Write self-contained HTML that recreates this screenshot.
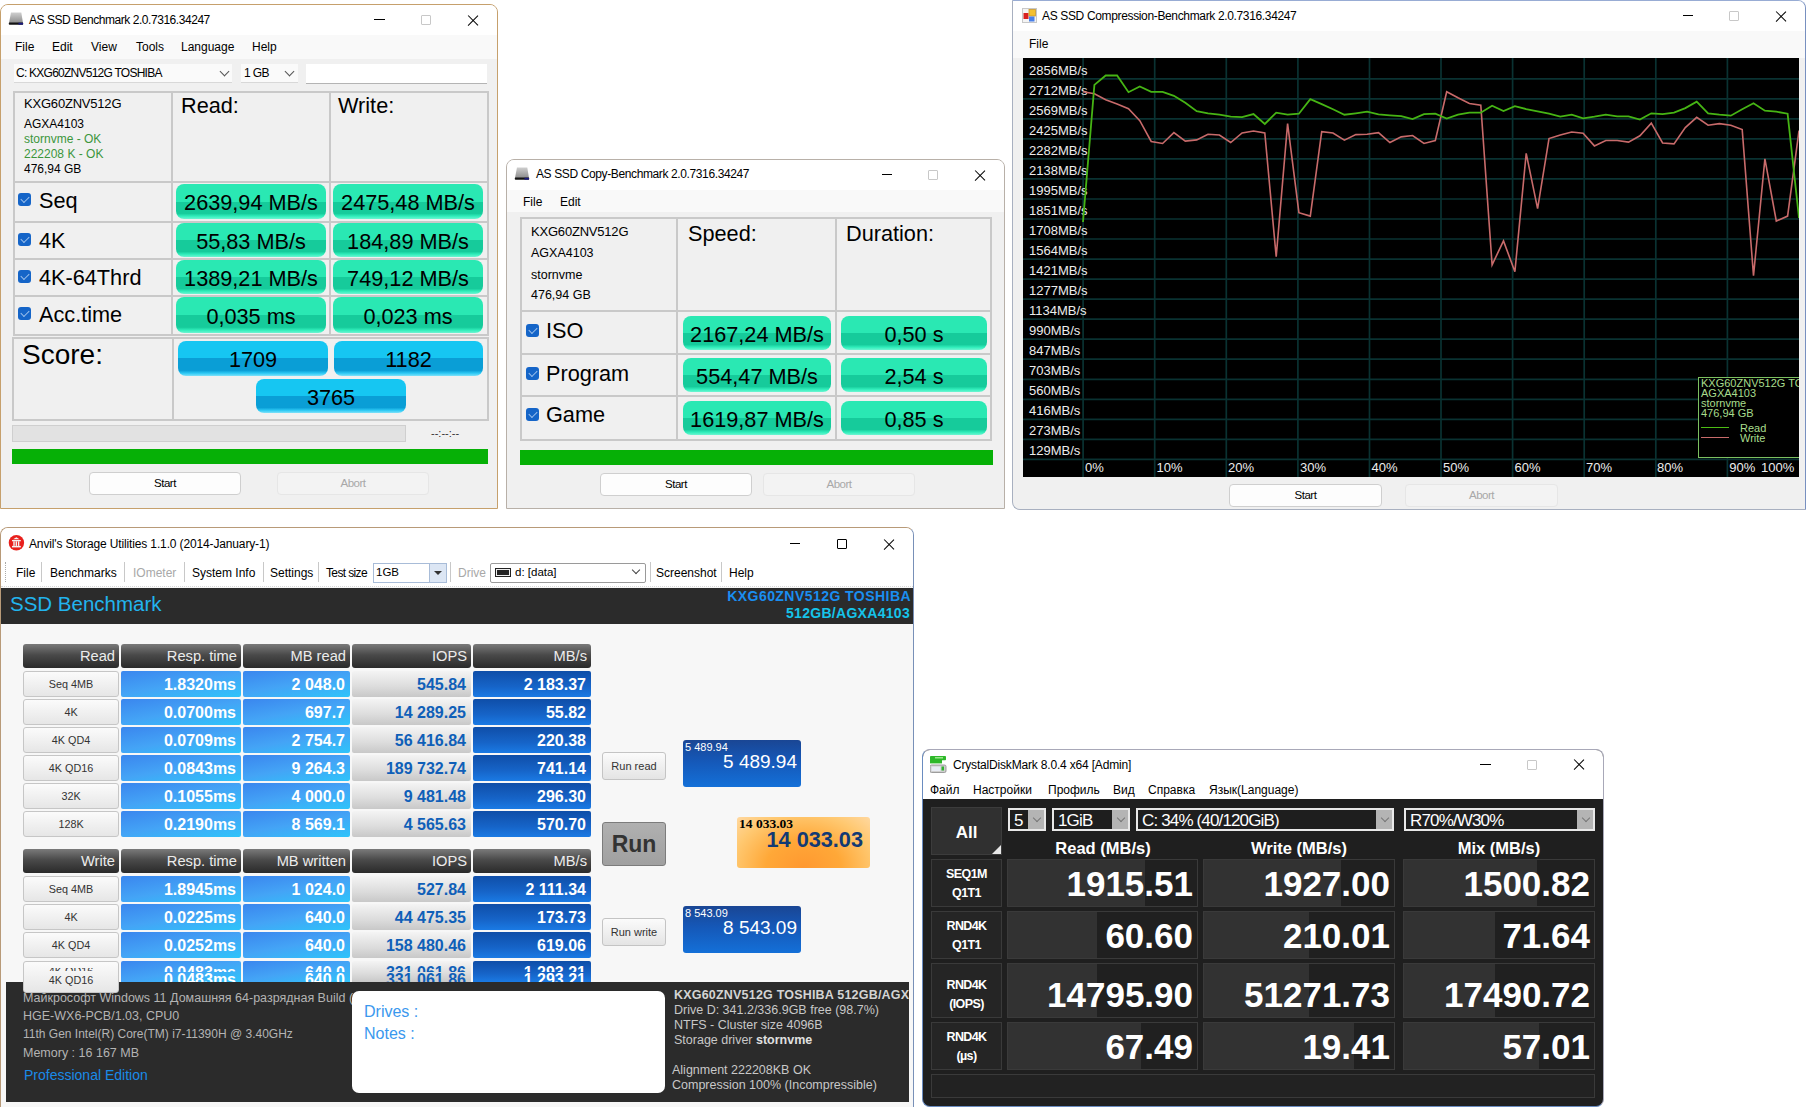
<!DOCTYPE html><html><head><meta charset="utf-8"><style>
*{margin:0;padding:0;box-sizing:border-box}
html,body{width:1806px;height:1107px;overflow:hidden;background:#fff;font-family:"Liberation Sans",sans-serif;color:#000}
div,span,svg{position:absolute;white-space:nowrap}
span.i{position:static}
.gbtn{border-radius:8px;background:linear-gradient(#2ae8b3 0%,#2ae8b3 50%,#16cb9b 50%,#16cb9b 84%,#30eebb 92%,#6ff5d2 100%);text-align:center;color:#000}
.bbtn{border-radius:8px;background:linear-gradient(#16c6f2 0%,#16c6f2 50%,#0a9ed6 50%,#0a9ed6 84%,#2cc8f4 92%,#7fe2fa 100%);text-align:center;color:#000}
.cb{width:13px;height:13px;border-radius:3px;background:#1565c8}
.cb:after{content:"";position:absolute;left:3px;top:3px;width:7px;height:4px;border-left:1.4px solid #9cc0ec;border-bottom:1.4px solid #9cc0ec;transform:rotate(-45deg)}
.hl{background:#c9c9c9;height:2px}
.vl{background:#c9c9c9;width:2px}
.btn{background:#fdfdfd;border:1px solid #cfcfcf;border-radius:4px;text-align:center;font-size:11.5px;letter-spacing:-0.5px;color:#000}
.btnd{background:#f3f3f3;border:1px solid #e6e6e6;border-radius:4px;text-align:center;font-size:11.5px;letter-spacing:-0.5px;color:#a8a8a8}
.t12{font-size:12px}
.min{height:1px;background:#000}
.max{border:1px solid #c8c8c8;border-radius:1px}
.x{width:10px;height:10px}
.x:before,.x:after{content:"";position:absolute;left:-2.1px;top:4.5px;width:14.2px;height:1.1px;background:#000;transform:rotate(45deg)}
.x:after{transform:rotate(-45deg)}
.chev{width:7px;height:7px;border-right:1px solid #555;border-bottom:1px solid #555;transform:rotate(45deg)}
.ahd{background:linear-gradient(#7a7a7a,#4a4a4a 45%,#2a2a2a);border-radius:3px;color:#ececec;font-size:14.7px;text-align:right;padding-right:4px;line-height:24px}
.alb{background:linear-gradient(#fbfbfb,#e6e6e6);border:1px solid #c6c6c6;border-radius:3px;color:#333;font-size:10.8px;text-align:center;line-height:24px}
.ab1{background:linear-gradient(170deg,#3a86ee 0%,#44a4f6 50%,#2ec4fa 100%);border-radius:2px;color:#fff;font-weight:bold;font-size:16px;text-align:right;padding-right:5px;line-height:26px}
.ab2{background:linear-gradient(#f4f4f4,#dcdcdc 60%,#c8c8c8);border-radius:2px;color:#0f5fb8;font-weight:bold;font-size:16px;text-align:right;padding-right:5px;line-height:26px}
.ab3{background:linear-gradient(#0f4ea8,#1664c8 60%,#1a7ae4);border-radius:2px;color:#fff;font-weight:bold;font-size:16px;text-align:right;padding-right:5px;line-height:26px}
.clab{background:#252525;border:1px solid #3a3a3a;color:#fff;font-weight:bold;font-size:12.5px;letter-spacing:-0.6px;text-align:center;line-height:19px}
.ccell{border:1px solid #3a3a3a;overflow:hidden}
.cval{color:#fff;font-weight:bold;font-size:35px;text-align:right}
.ccombo{background:#1e1e1e;border:2px solid #e8e8e8;color:#fff;font-size:17px;line-height:21px;padding-left:4px;letter-spacing:-0.85px}
.cbtn{background:#b4b4b4}
</style></head><body>

<div style="left:0;top:4px;width:498px;height:505px;background:#f0f0f0;border:1px solid #c6a06c;border-radius:8px 8px 0 0"></div>
<div style="left:1px;top:5px;width:496px;height:30px;background:#fff;border-radius:7px 7px 0 0"></div>
<div style="left:1px;top:35px;width:496px;height:24px;background:#f9f9f9"></div>
<svg style="left:8px;top:11px" width="16" height="15" viewBox="0 0 16 15"><defs><linearGradient id="asg" x1="0" y1="0" x2="0" y2="1"><stop offset="0" stop-color="#cfcfcf"/><stop offset="1" stop-color="#8c8c8c"/></linearGradient></defs><path d="M3 1.5 L13.3 1.5 L15 12 L1 12 Z" fill="url(#asg)"/><rect x="0.8" y="11.5" width="14.4" height="2.3" rx="0.8" fill="#141414"/><rect x="10.5" y="11.8" width="4.5" height="1.8" fill="#1a1a80"/></svg>
<div class="t12" style="left:29px;top:13px;letter-spacing:-0.45px">AS SSD Benchmark 2.0.7316.34247</div>
<div class="min" style="left:374px;top:19px;width:11px"></div>
<div class="max" style="left:421px;top:15px;width:10px;height:10px"></div>
<div class="x" style="left:468px;top:15px"></div>
<div class="t12" style="left:15px;top:40px">File</div>
<div class="t12" style="left:52px;top:40px">Edit</div>
<div class="t12" style="left:91px;top:40px">View</div>
<div class="t12" style="left:136px;top:40px">Tools</div>
<div class="t12" style="left:181px;top:40px">Language</div>
<div class="t12" style="left:252px;top:40px">Help</div>
<div style="left:14px;top:64px;width:218px;height:19px;background:#fafafa;border-bottom:1px solid #d8d8d8"></div>
<div class="t12" style="left:16px;top:66px;letter-spacing:-0.75px">C: KXG60ZNV512G TOSHIBA</div>
<div class="chev" style="left:221px;top:68px"></div>
<div style="left:241px;top:64px;width:57px;height:19px;background:#fafafa;border-bottom:1px solid #d8d8d8"></div>
<div class="t12" style="left:244px;top:66px;letter-spacing:-0.6px">1 GB</div>
<div class="chev" style="left:286px;top:68px"></div>
<div style="left:306px;top:64px;width:181px;height:20px;background:#fff;border-bottom:1px solid #b4b4b4"></div>
<div style="left:13px;top:91px;width:476px;height:245px;border:2px solid #c9c9c9"></div>
<div class="vl" style="left:171px;top:91px;height:245px"></div>
<div class="vl" style="left:329px;top:91px;height:245px"></div>
<div class="hl" style="left:13px;top:181px;width:476px"></div>
<div class="hl" style="left:13px;top:221px;width:476px"></div>
<div class="hl" style="left:13px;top:258px;width:476px"></div>
<div class="hl" style="left:13px;top:295px;width:476px"></div>
<div style="left:24px;top:96px;font-size:13px;letter-spacing:-0.2px">KXG60ZNV512G</div>
<div style="left:24px;top:117px;font-size:12px">AGXA4103</div>
<div style="left:24px;top:132px;font-size:12px;color:#3c963c">stornvme - OK</div>
<div style="left:24px;top:147px;font-size:12px;color:#3c963c">222208 K - OK</div>
<div style="left:24px;top:162px;font-size:12px">476,94 GB</div>
<div style="left:181px;top:93px;font-size:21.7px">Read:</div>
<div style="left:338px;top:93px;font-size:21.7px">Write:</div>
<div class="cb" style="left:18px;top:193px"></div><div style="left:39px;top:188px;font-size:21.7px">Seq</div>
<div class="cb" style="left:18px;top:233px"></div><div style="left:39px;top:228px;font-size:21.7px">4K</div>
<div class="cb" style="left:18px;top:270px"></div><div style="left:39px;top:265px;font-size:21.7px">4K-64Thrd</div>
<div class="cb" style="left:18px;top:307px"></div><div style="left:39px;top:302px;font-size:21.7px">Acc.time</div>
<div class="gbtn" style="left:176px;top:184px;width:150px;height:35px;font-size:21.7px;line-height:38px">2639,94 MB/s</div>
<div class="gbtn" style="left:333px;top:184px;width:150px;height:35px;font-size:21.7px;line-height:38px">2475,48 MB/s</div>
<div class="gbtn" style="left:176px;top:223px;width:150px;height:34px;font-size:21.7px;line-height:37px">55,83 MB/s</div>
<div class="gbtn" style="left:333px;top:223px;width:150px;height:34px;font-size:21.7px;line-height:37px">184,89 MB/s</div>
<div class="gbtn" style="left:176px;top:260px;width:150px;height:34px;font-size:21.7px;line-height:37px">1389,21 MB/s</div>
<div class="gbtn" style="left:333px;top:260px;width:150px;height:34px;font-size:21.7px;line-height:37px">749,12 MB/s</div>
<div class="gbtn" style="left:176px;top:297px;width:150px;height:36px;font-size:21.7px;line-height:39px">0,035 ms</div>
<div class="gbtn" style="left:333px;top:297px;width:150px;height:36px;font-size:21.7px;line-height:39px">0,023 ms</div>
<div style="left:12px;top:337px;width:477px;height:84px;border:2px solid #c9c9c9"></div>
<div class="vl" style="left:172px;top:337px;height:84px"></div>
<div style="left:22px;top:339px;font-size:28px">Score:</div>
<div class="bbtn" style="left:178px;top:341px;width:150px;height:35px;font-size:21.7px;line-height:38px">1709</div>
<div class="bbtn" style="left:334px;top:341px;width:149px;height:35px;font-size:21.7px;line-height:38px">1182</div>
<div class="bbtn" style="left:256px;top:379px;width:150px;height:34px;font-size:21.7px;line-height:37px">3765</div>
<div style="left:12px;top:425px;width:394px;height:17px;background:#e2e2e2;border:1px solid #cfcfcf"></div>
<div style="left:431px;top:427px;font-size:11px;color:#333">--:--:--</div>
<div style="left:12px;top:449px;width:476px;height:15px;background:#06b006"></div>
<div class="btn" style="left:89px;top:472px;width:152px;height:23px;line-height:21px">Start</div>
<div class="btnd" style="left:277px;top:472px;width:152px;height:23px;line-height:21px">Abort</div>


<div style="left:506px;top:159px;width:499px;height:350px;background:#f0f0f0;border:1px solid #b8b0a8;border-radius:8px 8px 0 0"></div>
<div style="left:507px;top:160px;width:497px;height:30px;background:#fff;border-radius:7px 7px 0 0"></div>
<div style="left:507px;top:190px;width:497px;height:22px;background:#f9f9f9"></div>
<svg style="left:514px;top:166px" width="16" height="15" viewBox="0 0 16 15"><defs><linearGradient id="asg" x1="0" y1="0" x2="0" y2="1"><stop offset="0" stop-color="#cfcfcf"/><stop offset="1" stop-color="#8c8c8c"/></linearGradient></defs><path d="M3 1.5 L13.3 1.5 L15 12 L1 12 Z" fill="url(#asg)"/><rect x="0.8" y="11.5" width="14.4" height="2.3" rx="0.8" fill="#141414"/><rect x="10.5" y="11.8" width="4.5" height="1.8" fill="#1a1a80"/></svg>
<div class="t12" style="left:536px;top:167px;letter-spacing:-0.38px">AS SSD Copy-Benchmark 2.0.7316.34247</div>
<div class="min" style="left:882px;top:174px;width:10px"></div>
<div class="max" style="left:928px;top:170px;width:10px;height:10px"></div>
<div class="x" style="left:975px;top:170px"></div>
<div class="t12" style="left:523px;top:195px">File</div>
<div class="t12" style="left:560px;top:195px">Edit</div>
<div style="left:520px;top:217px;width:472px;height:224px;border:2px solid #c9c9c9"></div>
<div class="vl" style="left:676px;top:217px;height:224px"></div>
<div class="vl" style="left:835px;top:217px;height:224px"></div>
<div class="hl" style="left:520px;top:310px;width:472px"></div>
<div class="hl" style="left:520px;top:353px;width:472px"></div>
<div class="hl" style="left:520px;top:395px;width:472px"></div>
<div style="left:531px;top:224px;font-size:13px;letter-spacing:-0.2px">KXG60ZNV512G</div>
<div style="left:531px;top:246px;font-size:12.5px">AGXA4103</div>
<div style="left:531px;top:268px;font-size:12.5px">stornvme</div>
<div style="left:531px;top:288px;font-size:12.5px">476,94 GB</div>
<div style="left:688px;top:221px;font-size:21.7px">Speed:</div>
<div style="left:846px;top:221px;font-size:21.7px">Duration:</div>
<div class="cb" style="left:526px;top:324px"></div><div style="left:546px;top:318px;font-size:21.7px">ISO</div>
<div class="cb" style="left:526px;top:367px"></div><div style="left:546px;top:361px;font-size:21.7px">Program</div>
<div class="cb" style="left:526px;top:408px"></div><div style="left:546px;top:402px;font-size:21.7px">Game</div>
<div class="gbtn" style="left:683px;top:316px;width:148px;height:34px;font-size:21.7px;line-height:37px">2167,24 MB/s</div>
<div class="gbtn" style="left:841px;top:316px;width:146px;height:34px;font-size:21.7px;line-height:37px">0,50 s</div>
<div class="gbtn" style="left:683px;top:358px;width:148px;height:34px;font-size:21.7px;line-height:37px">554,47 MB/s</div>
<div class="gbtn" style="left:841px;top:358px;width:146px;height:34px;font-size:21.7px;line-height:37px">2,54 s</div>
<div class="gbtn" style="left:683px;top:401px;width:148px;height:34px;font-size:21.7px;line-height:37px">1619,87 MB/s</div>
<div class="gbtn" style="left:841px;top:401px;width:146px;height:34px;font-size:21.7px;line-height:37px">0,85 s</div>
<div style="left:520px;top:450px;width:473px;height:15px;background:#06b006"></div>
<div class="btn" style="left:600px;top:473px;width:152px;height:23px;line-height:21px">Start</div>
<div class="btnd" style="left:763px;top:473px;width:152px;height:23px;line-height:21px">Abort</div>


<div style="left:1012px;top:0px;width:794px;height:510px;background:#f0f0f0;border:1px solid #a8b0c0;border-top-color:#98acd4;border-right-color:#7890c0;border-radius:0 8px 0 8px"></div>
<div style="left:1013px;top:1px;width:792px;height:30px;background:#fff;border-radius:0 7px 0 0"></div>
<div style="left:1013px;top:31px;width:792px;height:27px;background:#f9f9f9"></div>
<svg style="left:1022px;top:8px" width="15" height="15" viewBox="0 0 15 15"><rect x="0.5" y="0.5" width="14" height="14" fill="#f4f4f4" stroke="#c8c8c8"/><rect x="1.5" y="5" width="5" height="6" fill="#d82020"/><rect x="7" y="1.5" width="6.5" height="6.5" fill="#f4c030" stroke="#c89830" stroke-width="0.8"/><rect x="7" y="8.5" width="5.5" height="5" fill="#4a80e8"/></svg>
<div class="t12" style="left:1042px;top:9px;letter-spacing:-0.35px">AS SSD Compression-Benchmark 2.0.7316.34247</div>
<div class="min" style="left:1683px;top:15px;width:10px"></div>
<div class="max" style="left:1729px;top:11px;width:10px;height:10px"></div>
<div class="x" style="left:1776px;top:11px"></div>
<div class="t12" style="left:1029px;top:37px">File</div>
<div style="left:1023px;top:58px;width:776px;height:419px;background:#000;overflow:hidden">

<svg width="776" height="419" style="left:0;top:0"><line x1="0" y1="20.8" x2="776" y2="20.8" stroke="#0a3232" stroke-width="1.7"/><line x1="0" y1="40.8" x2="776" y2="40.8" stroke="#0a3232" stroke-width="1.7"/><line x1="0" y1="60.9" x2="776" y2="60.9" stroke="#0a3232" stroke-width="1.7"/><line x1="0" y1="80.9" x2="776" y2="80.9" stroke="#0a3232" stroke-width="1.7"/><line x1="0" y1="100.9" x2="776" y2="100.9" stroke="#0a3232" stroke-width="1.7"/><line x1="0" y1="120.9" x2="776" y2="120.9" stroke="#0a3232" stroke-width="1.7"/><line x1="0" y1="141.0" x2="776" y2="141.0" stroke="#0a3232" stroke-width="1.7"/><line x1="0" y1="161.0" x2="776" y2="161.0" stroke="#0a3232" stroke-width="1.7"/><line x1="0" y1="181.0" x2="776" y2="181.0" stroke="#0a3232" stroke-width="1.7"/><line x1="0" y1="201.1" x2="776" y2="201.1" stroke="#0a3232" stroke-width="1.7"/><line x1="0" y1="221.1" x2="776" y2="221.1" stroke="#0a3232" stroke-width="1.7"/><line x1="0" y1="241.1" x2="776" y2="241.1" stroke="#0a3232" stroke-width="1.7"/><line x1="0" y1="261.2" x2="776" y2="261.2" stroke="#0a3232" stroke-width="1.7"/><line x1="0" y1="281.2" x2="776" y2="281.2" stroke="#0a3232" stroke-width="1.7"/><line x1="0" y1="301.2" x2="776" y2="301.2" stroke="#0a3232" stroke-width="1.7"/><line x1="0" y1="321.3" x2="776" y2="321.3" stroke="#0a3232" stroke-width="1.7"/><line x1="0" y1="341.3" x2="776" y2="341.3" stroke="#0a3232" stroke-width="1.7"/><line x1="0" y1="361.3" x2="776" y2="361.3" stroke="#0a3232" stroke-width="1.7"/><line x1="0" y1="381.3" x2="776" y2="381.3" stroke="#0a3232" stroke-width="1.7"/><line x1="0" y1="401.4" x2="776" y2="401.4" stroke="#0a3232" stroke-width="1.7"/><line x1="60.1" y1="0" x2="60.1" y2="419" stroke="#0a3232" stroke-width="1.7"/><line x1="131.7" y1="0" x2="131.7" y2="419" stroke="#0a3232" stroke-width="1.7"/><line x1="203.3" y1="0" x2="203.3" y2="419" stroke="#0a3232" stroke-width="1.7"/><line x1="274.9" y1="0" x2="274.9" y2="419" stroke="#0a3232" stroke-width="1.7"/><line x1="346.5" y1="0" x2="346.5" y2="419" stroke="#0a3232" stroke-width="1.7"/><line x1="418.0" y1="0" x2="418.0" y2="419" stroke="#0a3232" stroke-width="1.7"/><line x1="489.6" y1="0" x2="489.6" y2="419" stroke="#0a3232" stroke-width="1.7"/><line x1="561.2" y1="0" x2="561.2" y2="419" stroke="#0a3232" stroke-width="1.7"/><line x1="632.8" y1="0" x2="632.8" y2="419" stroke="#0a3232" stroke-width="1.7"/><line x1="704.4" y1="0" x2="704.4" y2="419" stroke="#0a3232" stroke-width="1.7"/></svg>
<div style="left:6px;top:5.8px;font-size:13px;color:#ececec;line-height:14px">2856MB/s</div><div style="left:6px;top:25.8px;font-size:13px;color:#ececec;line-height:14px">2712MB/s</div><div style="left:6px;top:45.9px;font-size:13px;color:#ececec;line-height:14px">2569MB/s</div><div style="left:6px;top:65.9px;font-size:13px;color:#ececec;line-height:14px">2425MB/s</div><div style="left:6px;top:85.9px;font-size:13px;color:#ececec;line-height:14px">2282MB/s</div><div style="left:6px;top:105.9px;font-size:13px;color:#ececec;line-height:14px">2138MB/s</div><div style="left:6px;top:126.0px;font-size:13px;color:#ececec;line-height:14px">1995MB/s</div><div style="left:6px;top:146.0px;font-size:13px;color:#ececec;line-height:14px">1851MB/s</div><div style="left:6px;top:166.0px;font-size:13px;color:#ececec;line-height:14px">1708MB/s</div><div style="left:6px;top:186.1px;font-size:13px;color:#ececec;line-height:14px">1564MB/s</div><div style="left:6px;top:206.1px;font-size:13px;color:#ececec;line-height:14px">1421MB/s</div><div style="left:6px;top:226.1px;font-size:13px;color:#ececec;line-height:14px">1277MB/s</div><div style="left:6px;top:246.2px;font-size:13px;color:#ececec;line-height:14px">1134MB/s</div><div style="left:6px;top:266.2px;font-size:13px;color:#ececec;line-height:14px">990MB/s</div><div style="left:6px;top:286.2px;font-size:13px;color:#ececec;line-height:14px">847MB/s</div><div style="left:6px;top:306.3px;font-size:13px;color:#ececec;line-height:14px">703MB/s</div><div style="left:6px;top:326.3px;font-size:13px;color:#ececec;line-height:14px">560MB/s</div><div style="left:6px;top:346.3px;font-size:13px;color:#ececec;line-height:14px">416MB/s</div><div style="left:6px;top:366.3px;font-size:13px;color:#ececec;line-height:14px">273MB/s</div><div style="left:6px;top:386.4px;font-size:13px;color:#ececec;line-height:14px">129MB/s</div><div style="left:62.0px;top:402.5px;font-size:13px;color:#ececec;line-height:14px">0%</div><div style="left:133.5px;top:402.5px;font-size:13px;color:#ececec;line-height:14px">10%</div><div style="left:205.0px;top:402.5px;font-size:13px;color:#ececec;line-height:14px">20%</div><div style="left:277.0px;top:402.5px;font-size:13px;color:#ececec;line-height:14px">30%</div><div style="left:348.5px;top:402.5px;font-size:13px;color:#ececec;line-height:14px">40%</div><div style="left:420.0px;top:402.5px;font-size:13px;color:#ececec;line-height:14px">50%</div><div style="left:491.5px;top:402.5px;font-size:13px;color:#ececec;line-height:14px">60%</div><div style="left:563.0px;top:402.5px;font-size:13px;color:#ececec;line-height:14px">70%</div><div style="left:634.0px;top:402.5px;font-size:13px;color:#ececec;line-height:14px">80%</div><div style="left:706.3px;top:402.5px;font-size:13px;color:#ececec;line-height:14px">90%</div><div style="left:738.0px;top:402.5px;font-size:13px;color:#ececec;line-height:14px">100%</div>
<svg width="776" height="419" style="left:0;top:0"><polyline points="60.0,33.8 71.4,35.8 82.7,41.8 94.1,46.1 105.5,50.7 116.8,62.6 128.2,83.5 139.6,85.5 150.9,74.6 162.3,83.1 173.7,81.9 185.0,76.2 196.4,77.0 207.7,84.5 219.1,75.0 230.5,73.0 241.8,75.0 253.2,198.8 264.6,65.6 275.9,154.7 287.3,158.1 298.7,73.6 310.0,75.0 321.4,82.1 332.8,76.6 344.1,76.2 355.5,74.6 366.9,84.5 378.2,78.9 389.6,77.5 401.0,85.5 412.3,82.5 423.7,33.8 435.0,39.8 446.4,45.5 457.8,47.3 469.1,206.8 480.5,182.9 491.9,213.7 503.2,95.4 514.6,150.7 526.0,80.5 537.3,77.1 548.7,74.0 560.1,75.2 571.4,87.9 582.8,82.5 594.2,82.5 605.5,84.1 616.9,77.8 628.3,65.2 639.6,85.0 651.0,85.9 662.3,69.6 673.7,59.3 685.1,67.2 696.4,65.6 707.8,67.2 719.2,71.6 730.5,217.7 741.9,100.8 753.3,163.0 764.6,158.1 776.0,72.6" fill="none" stroke="#c86a6a" stroke-width="1.6"/><polyline points="60.0,164.0 71.4,26.9 82.7,17.5 94.1,17.5 105.5,34.2 116.8,28.4 128.2,33.8 139.6,33.8 150.9,37.8 162.3,44.7 173.7,53.1 185.0,55.3 196.4,56.7 207.7,58.7 219.1,59.1 230.5,56.1 241.8,66.0 253.2,54.7 264.6,56.7 275.9,55.7 287.3,41.2 298.7,46.1 310.0,51.3 321.4,56.7 332.8,55.3 344.1,53.7 355.5,56.3 366.9,57.3 378.2,58.1 389.6,61.0 401.0,56.1 412.3,55.7 423.7,60.6 435.0,56.7 446.4,54.7 457.8,54.7 469.1,47.7 480.5,53.1 491.9,48.1 503.2,51.1 514.6,53.3 526.0,55.7 537.3,58.7 548.7,56.7 560.1,60.3 571.4,58.7 582.8,56.7 594.2,58.3 605.5,58.3 616.9,61.6 628.3,55.3 639.6,56.1 651.0,54.7 662.3,50.1 673.7,43.7 685.1,55.3 696.4,56.7 707.8,57.7 719.2,51.3 730.5,45.3 741.9,52.7 753.3,53.7 764.6,55.7 776.0,160.0" fill="none" stroke="#46b414" stroke-width="1.8"/></svg>
<div style="left:675px;top:319px;width:120px;height:81px;border:1px solid #7cc060;background:#000"></div>
<div style="left:678px;top:320px;font-size:11px;line-height:10px;color:#a8dc8c">KXG60ZNV512G TOSHIBA<br>AGXA4103<br>stornvme<br>476,94 GB</div>
<div style="left:678px;top:369px;width:28px;height:1px;background:#4cbc14"></div>
<div style="left:678px;top:379px;width:28px;height:1px;background:#c86a6a"></div>
<div style="left:717px;top:365px;font-size:11px;line-height:10px;color:#a8dc8c">Read<br>Write</div>

</div>

<div class="btn" style="left:1229px;top:484px;width:153px;height:23px;line-height:21px">Start</div>
<div class="btnd" style="left:1405px;top:484px;width:153px;height:23px;line-height:21px">Abort</div>


<div style="left:0px;top:527px;width:914px;height:585px;background:#f7f7f7;border:1px solid #b89a78;border-right-color:#7890b8;border-radius:8px 8px 0 0"></div>
<div style="left:1px;top:528px;width:912px;height:30px;background:#fff;border-radius:7px 7px 0 0"></div>
<div style="left:1px;top:558px;width:912px;height:29px;background:#fff;border-bottom:1px dotted #d8d8d8"></div>
<svg style="left:8px;top:535px" width="17" height="16" viewBox="0 0 17 16"><circle cx="8.4" cy="7.8" r="7.7" fill="#e8201c"/><path d="M8.3 2.2 L11.5 4.3 L5.1 4.3 Z" fill="#f4f4f4"/><rect x="4" y="5" width="8.8" height="1.3" fill="#f4f4f4"/><rect x="5.3" y="6.3" width="1.4" height="4.6" fill="#f4f4f4"/><rect x="7.6" y="6.3" width="1.4" height="4.6" fill="#f4f4f4"/><rect x="9.9" y="6.3" width="1.4" height="4.6" fill="#f4f4f4"/><rect x="4" y="10.9" width="8.8" height="1.5" fill="#f4f4f4"/></svg>

<div class="t12" style="left:29px;top:537px;letter-spacing:-0.14px">Anvil's Storage Utilities 1.1.0 (2014-January-1)</div>
<div class="min" style="left:790px;top:543px;width:10px"></div>
<div style="left:837px;top:539px;width:10px;height:10px;border:1.2px solid #000;border-radius:1px"></div>
<div class="x" style="left:884px;top:539px"></div>
<div style="left:5px;top:562px;width:1px;height:20px;border-left:1px dotted #aaa"></div>
<div class="t12" style="left:16px;top:566px">File</div>
<div style="left:41px;top:562px;width:1px;height:20px;background:#c8c8c8"></div>
<div class="t12" style="left:50px;top:566px">Benchmarks</div>
<div style="left:124px;top:562px;width:1px;height:20px;background:#c8c8c8"></div>
<div class="t12" style="left:133px;top:566px;color:#a8a8a8">IOmeter</div>
<div style="left:184px;top:562px;width:1px;height:20px;background:#c8c8c8"></div>
<div class="t12" style="left:192px;top:566px">System Info</div>
<div style="left:263px;top:562px;width:1px;height:20px;background:#c8c8c8"></div>
<div class="t12" style="left:270px;top:566px">Settings</div>
<div style="left:318px;top:562px;width:1px;height:20px;background:#c8c8c8"></div>
<div class="t12" style="left:326px;top:566px;letter-spacing:-0.63px">Test size</div>
<div style="left:373px;top:563px;width:74px;height:20px;background:#fff;border:1px solid #a8bcd8"></div>
<div style="left:429px;top:564px;width:17px;height:18px;background:#dce6f4;border-left:1px solid #a8bcd8"></div>
<div style="left:434px;top:571px;width:0;height:0;border-left:4px solid transparent;border-right:4px solid transparent;border-top:4px solid #333"></div>
<div style="left:376px;top:566px;font-size:11.5px">1GB</div>
<div style="left:450px;top:562px;width:1px;height:20px;background:#c8c8c8"></div>
<div class="t12" style="left:458px;top:566px;color:#a8a8a8">Drive</div>
<div style="left:490px;top:563px;width:156px;height:20px;background:#fff;border:1px solid #9a9a9a;border-radius:2px"></div>
<div style="left:495px;top:568px;width:16px;height:9px;background:#222;border:1px solid #222;box-shadow:inset 0 0 0 1px #eee"></div>
<div style="left:515px;top:566px;font-size:11.5px">d: [data]</div>
<div class="chev" style="left:633px;top:567px;width:6px;height:6px;border-color:#444"></div>
<div style="left:650px;top:562px;width:1px;height:20px;background:#c8c8c8"></div>
<div class="t12" style="left:656px;top:566px">Screenshot</div>
<div style="left:721px;top:562px;width:1px;height:20px;background:#c8c8c8"></div>
<div class="t12" style="left:729px;top:566px">Help</div>
<div style="left:1px;top:588px;width:912px;height:36px;background:#2b2b2b"></div>
<div style="left:10px;top:592px;font-size:20.5px;color:#22b4ee">SSD Benchmark</div>
<div style="left:560px;top:588px;width:351px;font-size:14px;font-weight:bold;letter-spacing:0.45px;color:#1a8ef0;text-align:right;line-height:16px">KXG60ZNV512G TOSHIBA</div>
<div style="left:560px;top:605px;width:350px;font-size:14px;font-weight:bold;letter-spacing:0.3px;color:#16c4ea;text-align:right;line-height:16px">512GB/AGXA4103</div>

<div class="ahd" style="left:23px;top:644px;width:96px;height:24px">Read</div>
<div class="ahd" style="left:121px;top:644px;width:120px;height:24px">Resp. time</div>
<div class="ahd" style="left:243px;top:644px;width:107px;height:24px">MB read</div>
<div class="ahd" style="left:352px;top:644px;width:119px;height:24px">IOPS</div>
<div class="ahd" style="left:473px;top:644px;width:118px;height:24px">MB/s</div>
<div class="alb" style="left:23px;top:671px;width:96px;height:26px;line-height:25px">Seq 4MB</div>
<div class="ab1" style="left:121px;top:671px;width:120px;height:26px;line-height:27px">1.8320ms</div>
<div class="ab1" style="left:243px;top:671px;width:107px;height:26px;line-height:27px">2 048.0</div>
<div class="ab2" style="left:352px;top:671px;width:119px;height:26px;line-height:27px">545.84</div>
<div class="ab3" style="left:473px;top:671px;width:118px;height:26px;line-height:27px">2 183.37</div>
<div class="alb" style="left:23px;top:699px;width:96px;height:26px;line-height:25px">4K</div>
<div class="ab1" style="left:121px;top:699px;width:120px;height:26px;line-height:27px">0.0700ms</div>
<div class="ab1" style="left:243px;top:699px;width:107px;height:26px;line-height:27px">697.7</div>
<div class="ab2" style="left:352px;top:699px;width:119px;height:26px;line-height:27px">14 289.25</div>
<div class="ab3" style="left:473px;top:699px;width:118px;height:26px;line-height:27px">55.82</div>
<div class="alb" style="left:23px;top:727px;width:96px;height:26px;line-height:25px">4K QD4</div>
<div class="ab1" style="left:121px;top:727px;width:120px;height:26px;line-height:27px">0.0709ms</div>
<div class="ab1" style="left:243px;top:727px;width:107px;height:26px;line-height:27px">2 754.7</div>
<div class="ab2" style="left:352px;top:727px;width:119px;height:26px;line-height:27px">56 416.84</div>
<div class="ab3" style="left:473px;top:727px;width:118px;height:26px;line-height:27px">220.38</div>
<div class="alb" style="left:23px;top:755px;width:96px;height:26px;line-height:25px">4K QD16</div>
<div class="ab1" style="left:121px;top:755px;width:120px;height:26px;line-height:27px">0.0843ms</div>
<div class="ab1" style="left:243px;top:755px;width:107px;height:26px;line-height:27px">9 264.3</div>
<div class="ab2" style="left:352px;top:755px;width:119px;height:26px;line-height:27px">189 732.74</div>
<div class="ab3" style="left:473px;top:755px;width:118px;height:26px;line-height:27px">741.14</div>
<div class="alb" style="left:23px;top:783px;width:96px;height:26px;line-height:25px">32K</div>
<div class="ab1" style="left:121px;top:783px;width:120px;height:26px;line-height:27px">0.1055ms</div>
<div class="ab1" style="left:243px;top:783px;width:107px;height:26px;line-height:27px">4 000.0</div>
<div class="ab2" style="left:352px;top:783px;width:119px;height:26px;line-height:27px">9 481.48</div>
<div class="ab3" style="left:473px;top:783px;width:118px;height:26px;line-height:27px">296.30</div>
<div class="alb" style="left:23px;top:811px;width:96px;height:26px;line-height:25px">128K</div>
<div class="ab1" style="left:121px;top:811px;width:120px;height:26px;line-height:27px">0.2190ms</div>
<div class="ab1" style="left:243px;top:811px;width:107px;height:26px;line-height:27px">8 569.1</div>
<div class="ab2" style="left:352px;top:811px;width:119px;height:26px;line-height:27px">4 565.63</div>
<div class="ab3" style="left:473px;top:811px;width:118px;height:26px;line-height:27px">570.70</div>
<div class="ahd" style="left:23px;top:849px;width:96px;height:24px">Write</div>
<div class="ahd" style="left:121px;top:849px;width:120px;height:24px">Resp. time</div>
<div class="ahd" style="left:243px;top:849px;width:107px;height:24px">MB written</div>
<div class="ahd" style="left:352px;top:849px;width:119px;height:24px">IOPS</div>
<div class="ahd" style="left:473px;top:849px;width:118px;height:24px">MB/s</div>
<div class="alb" style="left:23px;top:876px;width:96px;height:26px;line-height:25px">Seq 4MB</div>
<div class="ab1" style="left:121px;top:876px;width:120px;height:26px;line-height:27px">1.8945ms</div>
<div class="ab1" style="left:243px;top:876px;width:107px;height:26px;line-height:27px">1 024.0</div>
<div class="ab2" style="left:352px;top:876px;width:119px;height:26px;line-height:27px">527.84</div>
<div class="ab3" style="left:473px;top:876px;width:118px;height:26px;line-height:27px">2 111.34</div>
<div class="alb" style="left:23px;top:904px;width:96px;height:26px;line-height:25px">4K</div>
<div class="ab1" style="left:121px;top:904px;width:120px;height:26px;line-height:27px">0.0225ms</div>
<div class="ab1" style="left:243px;top:904px;width:107px;height:26px;line-height:27px">640.0</div>
<div class="ab2" style="left:352px;top:904px;width:119px;height:26px;line-height:27px">44 475.35</div>
<div class="ab3" style="left:473px;top:904px;width:118px;height:26px;line-height:27px">173.73</div>
<div class="alb" style="left:23px;top:932px;width:96px;height:26px;line-height:25px">4K QD4</div>
<div class="ab1" style="left:121px;top:932px;width:120px;height:26px;line-height:27px">0.0252ms</div>
<div class="ab1" style="left:243px;top:932px;width:107px;height:26px;line-height:27px">640.0</div>
<div class="ab2" style="left:352px;top:932px;width:119px;height:26px;line-height:27px">158 480.46</div>
<div class="ab3" style="left:473px;top:932px;width:118px;height:26px;line-height:27px">619.06</div>
<div class="ab1" style="left:121px;top:961px;width:120px;height:21px;border-radius:2px 2px 0 0"></div>
<div style="left:121px;top:961px;width:120px;height:10.5px;overflow:hidden"><div class="ab1" style="left:0;top:4.4px;width:120px;height:16px;line-height:16px;background:none">0.0483ms</div></div>
<div style="left:121px;top:971.5px;width:120px;height:10.5px;overflow:hidden"><div class="ab1" style="left:0;top:0.6px;width:120px;height:16px;line-height:16px;background:none">0.0483ms</div></div>
<div class="ab1" style="left:243px;top:961px;width:107px;height:21px;border-radius:2px 2px 0 0"></div>
<div style="left:243px;top:961px;width:107px;height:10.5px;overflow:hidden"><div class="ab1" style="left:0;top:4.4px;width:107px;height:16px;line-height:16px;background:none">640.0</div></div>
<div style="left:243px;top:971.5px;width:107px;height:10.5px;overflow:hidden"><div class="ab1" style="left:0;top:0.6px;width:107px;height:16px;line-height:16px;background:none">640.0</div></div>
<div class="ab2" style="left:352px;top:961px;width:119px;height:21px;border-radius:2px 2px 0 0"></div>
<div style="left:352px;top:961px;width:119px;height:10.5px;overflow:hidden"><div class="ab2" style="left:0;top:4.4px;width:119px;height:16px;line-height:16px;background:none">331 061.86</div></div>
<div style="left:352px;top:971.5px;width:119px;height:10.5px;overflow:hidden"><div class="ab2" style="left:0;top:0.6px;width:119px;height:16px;line-height:16px;background:none">331 061.86</div></div>
<div class="ab3" style="left:473px;top:961px;width:118px;height:21px;border-radius:2px 2px 0 0"></div>
<div style="left:473px;top:961px;width:118px;height:10.5px;overflow:hidden"><div class="ab3" style="left:0;top:4.4px;width:118px;height:16px;line-height:16px;background:none">1 293.21</div></div>
<div style="left:473px;top:971.5px;width:118px;height:10.5px;overflow:hidden"><div class="ab3" style="left:0;top:0.6px;width:118px;height:16px;line-height:16px;background:none">1 293.21</div></div>

<div style="left:602px;top:752px;width:64px;height:28px;background:linear-gradient(#fbfbfb,#e4e4e4);border:1px solid #c4c4c4;border-radius:3px;font-size:11px;color:#333;text-align:center;line-height:26px">Run read</div>
<div style="left:683px;top:740px;width:118px;height:47px;background:linear-gradient(#1a4694,#1558b8 45%,#1470d8);border-radius:3px"></div>
<div style="left:685px;top:741px;font-size:11px;color:#fff;line-height:12px">5 489.94</div>
<div style="left:683px;top:751px;width:114px;font-size:19px;color:#fff;text-align:right;line-height:22px">5 489.94</div>
<div style="left:602px;top:822px;width:64px;height:44px;background:linear-gradient(#b0b0b0,#a0a0a0);border:1px solid #7c7c7c;border-radius:3px;font-size:23px;font-weight:bold;color:#333;text-align:center;line-height:42px">Run</div>
<div style="left:737px;top:817px;width:133px;height:51px;background:radial-gradient(ellipse at 50% 100%,#ff9830 0%,#ffa838 40%,#ffc870 75%,#ffd8a0 100%);border-radius:3px"></div>
<div style="left:739px;top:817px;font-size:13.5px;font-weight:bold;font-family:'Liberation Serif',serif;color:#000;line-height:14px">14 033.03</div>
<div style="left:737px;top:828px;width:126px;font-size:21.7px;font-weight:bold;color:#123a74;text-align:right;line-height:24px">14 033.03</div>
<div style="left:602px;top:918px;width:64px;height:28px;background:linear-gradient(#fbfbfb,#e4e4e4);border:1px solid #c4c4c4;border-radius:3px;font-size:11px;color:#333;text-align:center;line-height:26px">Run write</div>
<div style="left:683px;top:906px;width:118px;height:47px;background:linear-gradient(#1a4694,#1558b8 45%,#1470d8);border-radius:3px"></div>
<div style="left:685px;top:907px;font-size:11px;color:#fff;line-height:12px">8 543.09</div>
<div style="left:683px;top:917px;width:114px;font-size:19px;color:#fff;text-align:right;line-height:22px">8 543.09</div>
<div style="left:6px;top:982px;width:903px;height:120px;background:#2b2b2b"></div>
<div class="alb" style="left:23px;top:961px;width:96px;height:32px;line-height:36px">4K QD16</div><div style="left:23px;top:968px;width:96px;height:3px;overflow:hidden"><div style="left:0;top:-3px;width:96px;font-size:10.8px;color:#333;text-align:center;line-height:12px">4K QD16</div></div>
<div style="left:23px;top:991px;font-size:12.5px;color:#b4b4b4;line-height:14px">Майкрософт Windows 11 Домашняя 64-разрядная Build (2</div>
<div style="left:23px;top:1009px;font-size:12.5px;color:#b4b4b4;line-height:14px">HGE-WX6-PCB/1.03, CPU0</div>
<div style="left:23px;top:1027px;font-size:12px;color:#b4b4b4;line-height:14px">11th Gen Intel(R) Core(TM) i7-11390H @ 3.40GHz</div>
<div style="left:23px;top:1046px;font-size:12.5px;color:#b4b4b4;line-height:14px">Memory : 16 167 MB</div>
<div style="left:24px;top:1068px;font-size:14px;color:#1a8ae8;line-height:15px">Professional Edition</div>
<div style="left:352px;top:991px;width:313px;height:102px;background:#fff;border-radius:7px"></div>
<div style="left:364px;top:1001.5px;font-size:16px;color:#3a98ee;line-height:19px">Drives :</div>
<div style="left:364px;top:1024px;font-size:16px;color:#3a98ee;line-height:19px">Notes :</div>
<div style="left:665px;top:982px;width:244px;height:120px;overflow:hidden">
<div style="left:9px;top:6px;font-size:12.5px;font-weight:bold;color:#d4d4d4;line-height:14px;letter-spacing:0.2px">KXG60ZNV512G TOSHIBA 512GB/AGXA4103</div>
</div>
<div style="left:674px;top:1003px;font-size:12.5px;color:#c8c8c8;line-height:14px">Drive D: 341.2/336.9GB free (98.7%)</div>
<div style="left:674px;top:1018px;font-size:12.5px;color:#c8c8c8;line-height:14px">NTFS - Cluster size 4096B</div>
<div style="left:674px;top:1033px;font-size:12.5px;color:#c8c8c8;line-height:14px">Storage driver <b style="color:#e0e0e0">stornvme</b></div>
<div style="left:672px;top:1063px;font-size:12.5px;color:#c8c8c8;line-height:14px">Alignment 222208KB OK</div>
<div style="left:672px;top:1078px;font-size:12.5px;color:#c8c8c8;line-height:14px">Compression 100% (Incompressible)</div>


<div style="left:922px;top:749px;width:682px;height:358px;background:#1f1f1f;border:1px solid #a8a8b8;border-left-color:#6a8cc0;border-bottom-color:#6a8cc0;border-radius:8px 8px 8px 8px"></div>
<div style="left:923px;top:750px;width:680px;height:49px;background:#fff;border-radius:7px 7px 0 0"></div>
<svg style="left:930px;top:756px" width="17" height="17" viewBox="0 0 17 17"><rect x="0" y="0" width="16" height="4.2" rx="0.8" fill="#2eb82a"/><rect x="0" y="3.8" width="12" height="3.6" fill="#2eb82a"/><rect x="5" y="1" width="8" height="1.5" fill="#9ae88a"/><rect x="0" y="9" width="16" height="7.5" rx="1.5" fill="#cfcfcf" stroke="#8a8a8a" stroke-width="0.8"/><rect x="1.5" y="10.5" width="9" height="4.5" fill="#e8ecf4"/><rect x="11.5" y="10.5" width="2.5" height="4" fill="#30b030"/></svg>
<div class="t12" style="left:953px;top:758px;letter-spacing:-0.18px">CrystalDiskMark 8.0.4 x64 [Admin]</div>
<div class="min" style="left:1480px;top:764px;width:11px"></div>
<div class="max" style="left:1527px;top:760px;width:10px;height:10px"></div>
<div class="x" style="left:1574px;top:759px"></div>
<div class="t12" style="left:930px;top:783px">Файл</div>
<div class="t12" style="left:973px;top:783px">Настройки</div>
<div class="t12" style="left:1048px;top:783px">Профиль</div>
<div class="t12" style="left:1113px;top:783px">Вид</div>
<div class="t12" style="left:1148px;top:783px">Справка</div>
<div class="t12" style="left:1209px;top:783px">Язык(Language)</div>
<div style="left:931px;top:807px;width:71px;height:48px;background:#303030;border:1px solid #3c3c3c"></div>
<div style="left:931px;top:823px;width:71px;font-size:17px;font-weight:bold;color:#fff;text-align:center;line-height:20px">All</div>
<div style="left:992px;top:845px;width:0;height:0;border-left:9px solid transparent;border-bottom:9px solid #e8e8e8"></div>
<div class="ccombo" style="left:1008px;top:808px;width:38px;height:23px">5</div>
<div class="cbtn" style="left:1028px;top:810px;width:16px;height:19px"></div>
<div class="ccombo" style="left:1052px;top:808px;width:78px;height:23px">1GiB</div>
<div class="cbtn" style="left:1112px;top:810px;width:16px;height:19px"></div>
<div class="ccombo" style="left:1136px;top:808px;width:258px;height:23px">C: 34% (40/120GiB)</div>
<div class="cbtn" style="left:1376px;top:810px;width:16px;height:19px"></div>
<div class="ccombo" style="left:1404px;top:808px;width:191px;height:23px">R70%/W30%</div>
<div class="cbtn" style="left:1577px;top:810px;width:16px;height:19px"></div>
<div style="left:1007px;top:839px;width:192px;font-size:16.5px;font-weight:bold;color:#fff;text-align:center;line-height:19px">Read (MB/s)</div>
<div style="left:1203px;top:839px;width:192px;font-size:16.5px;font-weight:bold;color:#fff;text-align:center;line-height:19px">Write (MB/s)</div>
<div style="left:1403px;top:839px;width:192px;font-size:16.5px;font-weight:bold;color:#fff;text-align:center;line-height:19px">Mix (MB/s)</div>
<div style="left:931px;top:1074px;width:664px;height:24px;border:1px solid #3a3a3a;background:#222"></div>

<div class="chev" style="left:1034px;top:815px;width:6px;height:6px;border-color:#777"></div>
<div class="chev" style="left:1118px;top:815px;width:6px;height:6px;border-color:#777"></div>
<div class="chev" style="left:1382px;top:815px;width:6px;height:6px;border-color:#777"></div>
<div class="chev" style="left:1583px;top:815px;width:6px;height:6px;border-color:#777"></div>
<div class="clab" style="left:931px;top:859px;width:71px;height:48px;padding-top:5px">SEQ1M<br>Q1T1</div>
<div class="ccell" style="left:1007px;top:859px;width:191px;height:48px;background:linear-gradient(90deg,#323232 0 137px,#202020 137px)"></div>
<div class="cval" style="left:1007px;top:864px;width:186px;line-height:40px">1915.51</div>
<div class="ccell" style="left:1203px;top:859px;width:192px;height:48px;background:linear-gradient(90deg,#323232 0 137px,#202020 137px)"></div>
<div class="cval" style="left:1203px;top:864px;width:187px;line-height:40px">1927.00</div>
<div class="ccell" style="left:1403px;top:859px;width:192px;height:48px;background:linear-gradient(90deg,#323232 0 133.5px,#202020 133.5px)"></div>
<div class="cval" style="left:1403px;top:864px;width:187px;line-height:40px">1500.82</div>
<div class="clab" style="left:931px;top:911px;width:71px;height:48px;padding-top:5px">RND4K<br>Q1T1</div>
<div class="ccell" style="left:1007px;top:911px;width:191px;height:48px;background:linear-gradient(90deg,#323232 0 89px,#202020 89px)"></div>
<div class="cval" style="left:1007px;top:916px;width:186px;line-height:40px">60.60</div>
<div class="ccell" style="left:1203px;top:911px;width:192px;height:48px;background:linear-gradient(90deg,#323232 0 105px,#202020 105px)"></div>
<div class="cval" style="left:1203px;top:916px;width:187px;line-height:40px">210.01</div>
<div class="ccell" style="left:1403px;top:911px;width:192px;height:48px;background:linear-gradient(90deg,#323232 0 91px,#202020 91px)"></div>
<div class="cval" style="left:1403px;top:916px;width:187px;line-height:40px">71.64</div>
<div class="clab" style="left:931px;top:963px;width:71px;height:55px;padding-top:12px">RND4K<br>(IOPS)</div>
<div class="ccell" style="left:1007px;top:963px;width:191px;height:55px;background:linear-gradient(90deg,#323232 0 89px,#202020 89px)"></div>
<div class="cval" style="left:1007px;top:975px;width:186px;line-height:40px">14795.90</div>
<div class="ccell" style="left:1203px;top:963px;width:192px;height:55px;background:linear-gradient(90deg,#323232 0 105px,#202020 105px)"></div>
<div class="cval" style="left:1203px;top:975px;width:187px;line-height:40px">51271.73</div>
<div class="ccell" style="left:1403px;top:963px;width:192px;height:55px;background:linear-gradient(90deg,#323232 0 91px,#202020 91px)"></div>
<div class="cval" style="left:1403px;top:975px;width:187px;line-height:40px">17490.72</div>
<div class="clab" style="left:931px;top:1022px;width:71px;height:48px;padding-top:5px">RND4K<br>(&micro;s)</div>
<div class="ccell" style="left:1007px;top:1022px;width:191px;height:48px;background:linear-gradient(90deg,#323232 0 133px,#202020 133px)"></div>
<div class="cval" style="left:1007px;top:1027px;width:186px;line-height:40px">67.49</div>
<div class="ccell" style="left:1203px;top:1022px;width:192px;height:48px;background:linear-gradient(90deg,#323232 0 150px,#202020 150px)"></div>
<div class="cval" style="left:1203px;top:1027px;width:187px;line-height:40px">19.41</div>
<div class="ccell" style="left:1403px;top:1022px;width:192px;height:48px;background:linear-gradient(90deg,#323232 0 135.5px,#202020 135.5px)"></div>
<div class="cval" style="left:1403px;top:1027px;width:187px;line-height:40px">57.01</div>
</body></html>
